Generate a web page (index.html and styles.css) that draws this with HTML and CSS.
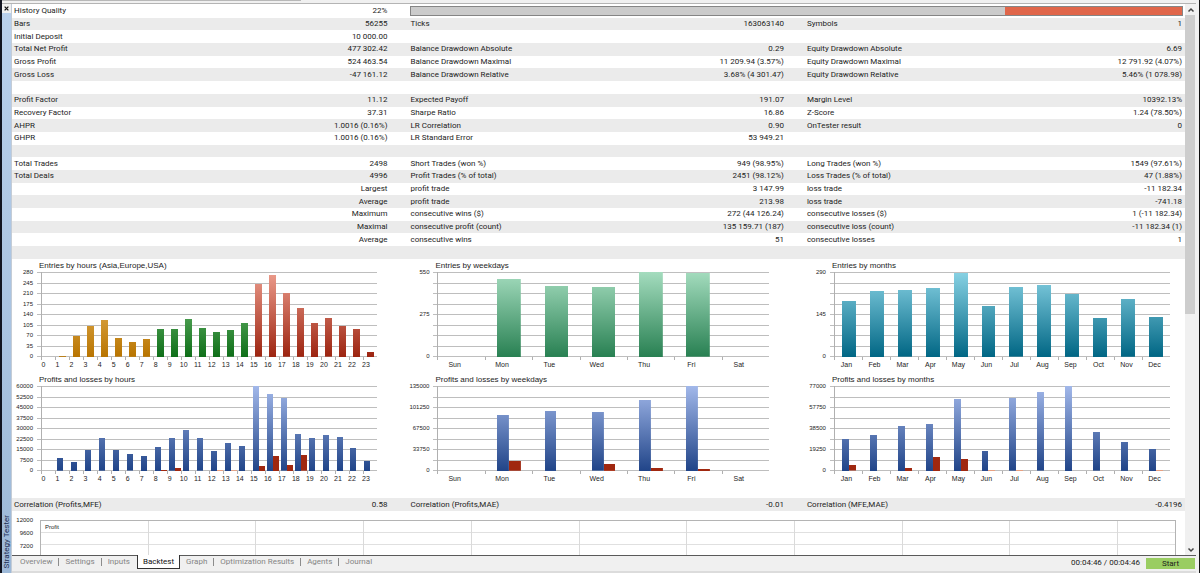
FILE: index.html
```
<!DOCTYPE html>
<html lang="en">
<head>
<meta charset="utf-8">
<title>Strategy Tester</title>
<link rel="stylesheet" href="styles.css">
</head>
<body>
<div class="window">
  <div class="topedge"><div class="topedge-mark"></div></div>
  <aside class="dock">
    <button class="dock-close" type="button" aria-label="Close">
      <svg viewBox="0 0 8 8" width="5" height="5"><path d="M1 1L7 7M7 1L1 7" stroke="#111" stroke-width="2"/></svg>
    </button>
    <span class="dock-title">Strategy Tester</span>
  </aside>
  <main class="report">
    <table class="stats">
      <colgroup><col class="c-label"><col class="c-value"><col class="c-label"><col class="c-value"><col class="c-label"><col class="c-last"></colgroup>
      <tbody>
      <tr><td>History Quality</td><td>22%</td><td class="quality-cell" colspan="4"><div class="quality"><div class="quality-bad"></div></div></td></tr>
      <tr><td>Bars</td><td>56255</td><td>Ticks</td><td>163063140</td><td>Symbols</td><td>1</td></tr>
      <tr><td>Initial Deposit</td><td>10 000.00</td><td></td><td></td><td></td><td></td></tr>
      <tr><td>Total Net Profit</td><td>477 302.42</td><td>Balance Drawdown Absolute</td><td>0.29</td><td>Equity Drawdown Absolute</td><td>6.69</td></tr>
      <tr><td>Gross Profit</td><td>524 463.54</td><td>Balance Drawdown Maximal</td><td>11 209.94 (3.57%)</td><td>Equity Drawdown Maximal</td><td>12 791.92 (4.07%)</td></tr>
      <tr><td>Gross Loss</td><td>-47 161.12</td><td>Balance Drawdown Relative</td><td>3.68% (4 301.47)</td><td>Equity Drawdown Relative</td><td>5.46% (1 078.98)</td></tr>
      <tr><td></td><td></td><td></td><td></td><td></td><td></td></tr>
      <tr><td>Profit Factor</td><td>11.12</td><td>Expected Payoff</td><td>191.07</td><td>Margin Level</td><td>10392.13%</td></tr>
      <tr><td>Recovery Factor</td><td>37.31</td><td>Sharpe Ratio</td><td>16.86</td><td>Z-Score</td><td>1.24 (78.50%)</td></tr>
      <tr><td>AHPR</td><td>1.0016 (0.16%)</td><td>LR Correlation</td><td>0.90</td><td>OnTester result</td><td>0</td></tr>
      <tr><td>GHPR</td><td>1.0016 (0.16%)</td><td>LR Standard Error</td><td>53 949.21</td><td></td><td></td></tr>
      <tr><td></td><td></td><td></td><td></td><td></td><td></td></tr>
      <tr><td>Total Trades</td><td>2498</td><td>Short Trades (won %)</td><td>949 (98.95%)</td><td>Long Trades (won %)</td><td>1549 (97.61%)</td></tr>
      <tr><td>Total Deals</td><td>4996</td><td>Profit Trades (% of total)</td><td>2451 (98.12%)</td><td>Loss Trades (% of total)</td><td>47 (1.88%)</td></tr>
      <tr><td></td><td>Largest</td><td>profit trade</td><td>3 147.99</td><td>loss trade</td><td>-11 182.34</td></tr>
      <tr><td></td><td>Average</td><td>profit trade</td><td>213.98</td><td>loss trade</td><td>-741.18</td></tr>
      <tr><td></td><td>Maximum</td><td>consecutive wins ($)</td><td>272 (44 126.24)</td><td>consecutive losses ($)</td><td>1 (-11 182.34)</td></tr>
      <tr><td></td><td>Maximal</td><td>consecutive profit (count)</td><td>135 159.71 (187)</td><td>consecutive loss (count)</td><td>-11 182.34 (1)</td></tr>
      <tr><td></td><td>Average</td><td>consecutive wins</td><td>51</td><td>consecutive losses</td><td>1</td></tr>
      <tr><td></td><td></td><td></td><td></td><td></td><td></td></tr>
      </tbody>
    </table>
    <section class="charts" id="charts"></section>
    <table class="stats stats-corr">
      <colgroup><col class="c-label"><col class="c-value"><col class="c-label"><col class="c-value"><col class="c-label"><col class="c-last"></colgroup>
      <tbody>
      <tr><td>Correlation (Profits,MFE)</td><td>0.58</td><td>Correlation (Profits,MAE)</td><td>-0.01</td><td>Correlation (MFE,MAE)</td><td>-0.4196</td></tr>
      </tbody>
    </table>
    <section class="scatter">
      <div class="scatter-axis"><span>12000</span><span>9600</span><span>7200</span></div>
      <div class="scatter-plot">
        <div class="scatter-rows"><i></i><i></i><i></i></div>
        <div class="scatter-cols"><i></i><i></i><i></i><i></i><i></i><i></i><i></i><i></i><i></i><i></i><i class="scatter-rest"></i></div>
        <span class="scatter-name">Profit</span>
      </div>
    </section>
  </main>
  <div class="scroll">
    <button class="scroll-btn" type="button" aria-label="Scroll up"><svg viewBox="0 0 8 8" width="8" height="8"><path d="M1.5 5.5L4 3L6.5 5.5" fill="none" stroke="#444" stroke-width="1.5"/></svg></button>
    <div class="scroll-track"><div class="scroll-thumb"></div></div>
    <button class="scroll-btn" type="button" aria-label="Scroll down"><svg viewBox="0 0 8 8" width="8" height="8"><path d="M1.5 2.5L4 5L6.5 2.5" fill="none" stroke="#444" stroke-width="1.5"/></svg></button>
  </div>
  <footer class="bar">
    <nav class="tabs">
      <button type="button" class="tab">Overview</button>
      <button type="button" class="tab">Settings</button>
      <button type="button" class="tab tab-plain">Inputs</button>
      <button type="button" class="tab tab-active">Backtest</button>
      <button type="button" class="tab">Graph</button>
      <button type="button" class="tab">Optimization Results</button>
      <button type="button" class="tab">Agents</button>
      <button type="button" class="tab tab-plain">Journal</button>
    </nav>
    <span class="clock">00:04:46 / 00:04:46</span>
    <button type="button" class="start">Start</button>
  </footer>
</div>
<script src="charts.js"></script>
</body>
</html>
```
FILE: styles.css
```
* { box-sizing: border-box; }
body {
  margin: 0;
  background: #f0f0f0;
  color: #1c1c1c;
  font: 8px/12px Roboto, "Open Sans", sans-serif;
}
button {
  margin: 0;
  padding: 0;
  border: 0;
  background: none;
  color: inherit;
  font: inherit;
}
svg { display: block; }

.window {
  display: grid;
  grid-template: 4px minmax(0, 1fr) 18px / 10px minmax(0, 1fr) 11px;
  height: 100vh;
  border-left: 2px solid #111420;
  border-right: 1px solid #111;
  padding-right: 3px;
}
.topedge {
  grid-column: 1 / -1;
  border-bottom: 1px solid #b4b4b4;
}
.topedge-mark { width: 25%; height: 1px; background: #b8b8b8; }

.dock {
  grid-row: 2 / 4;
  display: flex;
  flex-direction: column;
  justify-content: space-between;
  align-items: center;
  padding-bottom: 4px;
  border-right: 1px solid #c4ccd6;
  background: linear-gradient(#b9d0ec, #9db9d8);
}
.dock-close {
  display: flex;
  justify-content: center;
  align-items: center;
  width: 100%;
  height: 9px;
  background: #f0f0f0;
}
.dock-title {
  color: #1c2c50;
  line-height: 9px;
  writing-mode: vertical-rl;
  transform: rotate(180deg);
}

.report { overflow: hidden; padding-top: 1px; background: #fff; }

.stats {
  width: 100%;
  height: 254px;
  border-collapse: collapse;
  table-layout: fixed;
}
.c-label { width: 20%; }
.c-value { width: 13.8%; }
.c-last { width: 12.4%; }
.stats tr:nth-child(even), .stats-corr tr { background: #ebebeb; }
.stats td {
  height: 12px;
  padding: 0 0 0 2px;
  line-height: 12px;
  white-space: nowrap;
}
.stats td:nth-child(even) { padding-right: 21px; text-align: right; }
.stats td:nth-child(6) { padding-right: 3px; }
.stats .quality-cell { padding-right: 2px; }
.quality {
  display: flex;
  justify-content: flex-end;
  height: 10px;
  border: 1px solid #858585;
  background: #cbcbcb;
}
.quality-bad { width: 23%; background: #e0664a; }

.charts {
  display: grid;
  grid-template-columns: 33.8% 33.8% 32.4%;
  row-gap: 5px;
  padding: 1px 0 15px;
}
.chart {
  display: grid;
  grid-template: 12px 85px 12px / 21px 4px minmax(0, 1fr);
  padding-right: 31px;
  font-family: "Liberation Sans", Arial, sans-serif;
}
.chart-weekdays { padding-right: 36px; }
.chart-months { padding-right: 15px; }
.chart-title {
  grid-column: 1 / -1;
  margin: 0;
  padding-left: 27px;
  font-size: 8px;
  font-weight: 400;
}
.chart-y {
  display: flex;
  flex-direction: column;
  justify-content: space-between;
  font-size: 6px;
  text-align: right;
}
.chart-y span { height: 1px; line-height: 1px; }
.chart-plot {
  display: grid;
  grid-column: 2 / 4;
  grid-template: 100% / 4px minmax(0, 1fr);
  margin-left: 4px;
}
.chart-grid {
  grid-area: 1 / 1 / 2 / 3;
  display: flex;
  flex-direction: column;
  justify-content: space-between;
}
.chart-grid i { height: 1px; background: #bebebe; }
.chart-bars {
  grid-area: 1 / 2;
  display: grid;
  grid-auto-flow: column;
  grid-auto-columns: minmax(0, 1fr);
  border-left: 1px solid #b0b0b0;
}
.slot {
  display: flex;
  justify-content: center;
  align-items: flex-end;
  min-height: 0;
}
.bar-col {
  width: 50%;
  background-position: bottom;
  background-size: 100% 85px;
}
.slot-pair .bar-col { width: 25%; }
.chart-hours .slot-pair .bar-col { width: 43%; }
.amber { background-image: linear-gradient(#f4c878, #b87400); }
.green { background-image: linear-gradient(#8cd08c, #0e6e18); }
.red { background-image: linear-gradient(#ec9c8c, #9c2410); }
.mint { background-image: linear-gradient(#a4dcbe, #288052); }
.teal { background-image: linear-gradient(#88d2e4, #006684); }
.blue { background-image: linear-gradient(#a2b8ea, #204488); }
.loss { background-image: linear-gradient(#e89070, #a02810 50%); }
.loss-faint { background-image: linear-gradient(#e8a080, #e8a080); }
.chart-x {
  grid-column: 3;
  display: grid;
  grid-auto-flow: column;
  grid-auto-columns: minmax(0, 1fr);
  margin-left: 4px;
  font-size: 7px;
  line-height: 16px;
  text-align: center;
}
.tick { display: flex; }
.tick::before { content: ""; width: 1px; height: 3px; background: #b0b0b0; }
.tick span { flex: 1; }
.chart-hours .tick span { margin-left: -10px; }
.chart-weekdays .tick span { margin-left: -14px; }
.chart-months .tick span { margin-left: -4px; }

.stats-corr { height: 13px; }

.scatter {
  display: grid;
  grid-template-columns: 21px minmax(0, 1fr);
  column-gap: 7px;
  padding: 9px 9px 0 0;
  font-family: "Liberation Sans", Arial, sans-serif;
  font-size: 6px;
}
.scatter-axis {
  display: grid;
  grid-auto-rows: 12px;
  row-gap: 1px;
  margin-top: -6px;
  text-align: right;
}
.scatter-plot {
  display: grid;
  height: 52px;
  border: 1px solid #b4b4b4;
}
.scatter-rows, .scatter-cols, .scatter-name { grid-area: 1 / 1; }
.scatter-rows { display: grid; grid-auto-rows: 12px; }
.scatter-rows i { border-bottom: 1px solid #e0e0e0; }
.scatter-cols { display: flex; }
.scatter-cols i { width: 9.5%; border-right: 1px solid #dadada; }
.scatter-cols .scatter-rest { flex: 1; border: 0; }
.scatter-name { padding-left: 4px; }

.scroll {
  display: flex;
  flex-direction: column;
  background: #f0f0f0;
}
.scroll-btn {
  display: flex;
  justify-content: center;
  align-items: center;
  height: 11px;
}
.scroll-track { flex: 1; padding-right: 1px; }
.scroll-thumb { height: 56.5%; background: #cdcdcd; }

.bar {
  grid-column: 2 / 4;
  display: flex;
  align-items: flex-start;
  border-top: 1px solid #5a5a5a;
  border-bottom: 2px solid #dcdcdc;
}
.tabs {
  display: flex;
  flex: 1;
  margin-top: -1px;
  padding-left: 2px;
  color: #858585;
}
.tab {
  display: flex;
  align-items: center;
  height: 14px;
  padding-left: 6px;
  white-space: nowrap;
}
.tab::after {
  content: "";
  width: 1px;
  height: 8px;
  margin-left: 6px;
  background: #8c8c8c;
}
.tab-plain { padding-right: 7px; }
.tab-plain::after { content: none; }
.tab-active {
  padding: 0 5px;
  border: 1px solid #333;
  border-top: 0;
  background: #fff;
  color: #111;
}
.tab-active::after { content: none; }
.clock { padding: 1px 6px 0; }
.start {
  width: 49px;
  height: 11px;
  margin: 2px 1px 0 0;
  background: #9acd62;
  line-height: 11px;
}
```
FILE: charts.js
```
const hours = Array.from({ length: 24 }, (_, i) => String(i));
const days = ["Sun", "Mon", "Tue", "Wed", "Thu", "Fri", "Sat"];
const months = ["Jan", "Feb", "Mar", "Apr", "May", "Jun", "Jul", "Aug", "Sep", "Oct", "Nov", "Dec"];

// Bar heights are percentages of the top of each scale.
const charts = [
  { kind: "hours", title: "Entries by hours (Asia,Europe,USA)", x: hours,
    y: [280, 245, 210, 175, 140, 105, 70, 35, 0],
    color: i => (i < 8 ? "amber" : i < 15 ? "green" : "red"),
    main: [0, 1, 25, 37, 43.5, 22, 17.5, 21, 33, 33, 45, 34.5, 30, 31.5, 40, 85.5, 97, 75, 57.5, 40.5, 45.5, 37, 33, 6] },
  { kind: "weekdays", title: "Entries by weekdays", x: days, y: [550, 275, 0],
    color: () => "mint", main: [0, 92, 83.5, 82.5, 100, 98.5, 0] },
  { kind: "months", title: "Entries by months", x: months, y: [290, 145, 0],
    color: () => "teal", main: [66, 78, 78.5, 81.5, 99, 60, 82, 85, 74, 46, 68, 47] },
  { kind: "hours", title: "Profits and losses by hours", x: hours,
    y: [60000, 52500, 45000, 37500, 30000, 22500, 15000, 7500, 0],
    color: () => "blue",
    main: [0, 15, 10.5, 25, 38.5, 25, 19.5, 18, 28.5, 38.5, 48.5, 38.5, 23.5, 33, 29.5, 100, 91, 85.5, 44, 39, 42.5, 40, 27, 12],
    loss: [0, 0.5, 0, 0.5, 0, 0, 0, 0, 1.6, 4, 0.5, 0.5, 1.2, 1, 0, 6, 18, 7.5, 18.5, 0, 0, 0, 0, 0] },
  { kind: "weekdays", title: "Profits and losses by weekdays", x: days,
    y: [135000, 101250, 67500, 33750, 0],
    color: () => "blue", main: [0, 66, 70.5, 69, 84, 100, 0], loss: [0, 11.5, 0.6, 8, 4, 2.5, 0] },
  { kind: "months", title: "Profits and losses by months", x: months,
    y: [77000, 57750, 38500, 19250, 0],
    color: () => "blue",
    main: [38, 42.5, 53, 55.5, 85, 23.5, 85.5, 92.5, 100, 45.5, 34, 26],
    loss: [6.5, 0.6, 3.5, 17, 14.5, 1.2, 1.2, 0.6, 0.6, 0, 0.6, 1.2] }
];

const column = (value, color) => `<div class="bar-col ${color}" style="height:${value}%"></div>`;

document.getElementById("charts").innerHTML = charts.map(c => `
  <div class="chart chart-${c.kind}">
    <h2 class="chart-title">${c.title}</h2>
    <div class="chart-y">${c.y.map(v => `<span>${v}</span>`).join("")}</div>
    <div class="chart-plot">
      <div class="chart-grid">${"<i></i>".repeat(9)}</div>
      <div class="chart-bars">${c.main.map((v, i) => `
        <div class="slot${c.loss ? " slot-pair" : ""}">${column(v, c.color(i))}${
          c.loss ? column(c.loss[i], c.loss[i] < 1.5 ? "loss-faint" : "loss") : ""}</div>`).join("")}
      </div>
    </div>
    <div class="chart-x">${c.x.map(v => `<div class="tick"><span>${v}</span></div>`).join("")}</div>
  </div>`).join("");
```
